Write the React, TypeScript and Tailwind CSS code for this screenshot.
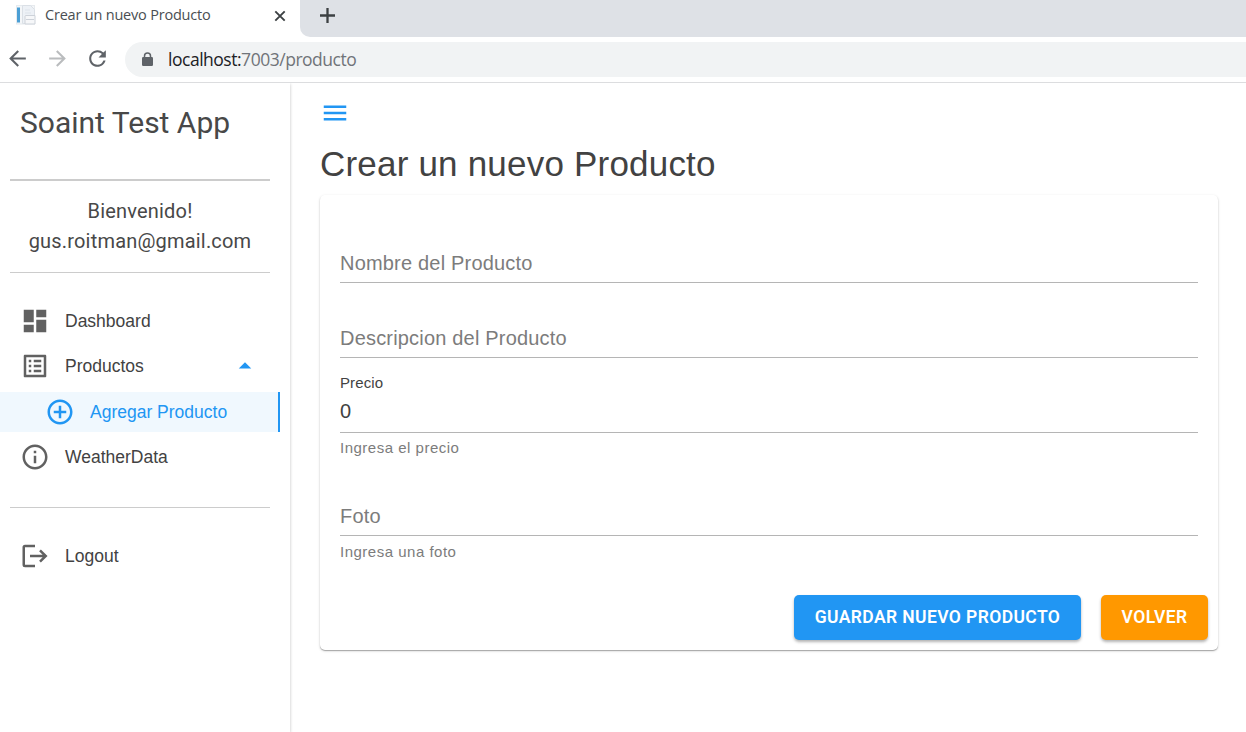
import type { ReactNode } from "react";
import { MdDashboard, MdListAlt, MdAddCircleOutline, MdInfoOutline, MdMenu, MdArrowDropUp, MdArrowBack, MdArrowForward, MdRefresh } from "react-icons/md";

function Favicon() {
  return (
    <svg width="20" height="20" viewBox="0 0 20 20" className="shrink-0">
      <rect x=".5" y=".5" width="18" height="18.5" fill="#f4f6f8" stroke="#e6eaee" />
      <rect x="1" y="2.5" width="3" height="15" fill="#4b9fd5" />
      <path d="M6.500.5h8l4 4v14h-12z" fill="#edf1f6" stroke="#dbe0e6" />
      <path d="M9 5h5M9 8h6" stroke="#dde3ea" />
      <path d="M9.500 10.500h9.500v8.500h-10v-8z" fill="#f6f7f9" stroke="#cdd2d9" />
      <path d="M10 14.500h8" stroke="#cdd2d9" />
    </svg>
  );
}

function LockIcon() {
  return (
    <svg width="13" height="15" viewBox="0 0 13 15" className="shrink-0">
      <path d="M3.500 6V4a3 3 0 0 1 6 0v2" fill="none" stroke="#5f6368" strokeWidth="1.5" />
      <rect x="1" y="5" width="11" height="9" rx="1.2" fill="#5f6368" />
    </svg>
  );
}

function LogoutIcon() {
  return (
    <svg width="30" height="30" viewBox="0 0 24 24" fill="none" stroke="currentColor" strokeWidth="2">
      <path d="M12 4H4Q3 4 3 5V19Q3 20 4 20H12" />
      <path d="M8 12H21M16 7.500L20.600 12L16 16.500" />
    </svg>
  );
}

function NavItem({ icon, label, children }: { icon: ReactNode; label: string; children?: ReactNode }) {
  return (
    <div className="flex h-[45px] items-center pl-5 text-[#424242]">
      <span className="flex w-[45px] pb-[2px] text-[#616161]">{icon}</span>
      <span className="grow">{label}</span>
      {children}
    </div>
  );
}

function Browser() {
  return (
    <header className="font-['Open_Sans','Noto_Sans',sans-serif]">
      <div className="flex h-[37px] bg-white">
        <div className="flex h-[30px] w-[300px] items-center bg-white pr-[14px] pl-4">
          <Favicon />
          <span className="ml-[9px] grow text-[14.500px] tracking-[-0.200px] whitespace-nowrap text-[#4a4e52]">Crear un nuevo Producto</span>
          <svg width="12" height="12" viewBox="0 0 12 12" className="mt-px shrink-0 stroke-[#3c4043]" strokeWidth="1.9">
            <path d="M1.300 1.300l9.400 9.400M10.700 1.300l-9.400 9.400" />
          </svg>
        </div>
        <div className="h-[37px] grow rounded-bl-[10px] bg-[#dee1e6] pt-[7px] pl-[19px]">
          <svg width="17" height="17" viewBox="0 0 17 17" className="stroke-[#3c4043]" strokeWidth="2.300">
            <path d="M8.500 1v15M1 8.500h15" />
          </svg>
        </div>
      </div>
      <div className="flex h-[46px] items-center border-b border-[#dcdddf] pl-[5px]">
        <MdArrowBack className="mb-[2px] size-[25px] text-[#5f6368]" />
        <MdArrowForward className="mb-[2px] ml-[15px] size-[25px] text-[#babcbe]" />
        <MdRefresh className="mb-[2px] ml-[15px] size-[25px] text-[#5f6368]" />
        <div className="ml-[15px] flex h-[35px] grow items-center rounded-l-full bg-[#f1f3f4] pl-[16px]">
          <LockIcon />
          <span className="ml-[14px] text-[17.500px] tracking-[-0.480px] text-[#707479]"><span className="text-[#202124]">localhost:</span>7003/producto</span>
        </div>
      </div>
    </header>
  );
}

function Sidebar() {
  return (
    <aside className="h-full w-[290px] shrink-0 pt-[18px] text-[17.500px] shadow-[0_1px_3px_rgba(0,0,0,0.25)]">
      <h2 className="pl-5 font-[Roboto,sans-serif] text-[30px] leading-[44px] text-[#484848]">Soaint Test App</h2>
      <hr className="mt-[34px] mr-5 ml-[10px] border-t-2 border-[#ccc]" />
      <div className="mt-[15px] w-[280px] text-center font-[Roboto,sans-serif] text-[20px] leading-[30px] tracking-[0.188px] text-[#484848]">
        <p>Bienvenido!</p>
        <p>gus.roitman@gmail.com</p>
      </div>
      <hr className="mt-[16px] mr-5 ml-[10px] border-[#ccc]" />
      <nav className="mt-[26px]">
        <NavItem icon={<MdDashboard size={30} />} label="Dashboard" />
        <NavItem icon={<MdListAlt size={30} />} label="Productos">
          <MdArrowDropUp size={30} className="mr-[30px] mb-[2px] text-[#2196f3]" />
        </NavItem>
        <div className="mt-[3px] mb-[3px] flex h-10 w-[280px] items-center border-r-2 border-[#2196f3] bg-[#f0f8fe] pl-[45px] text-[#2196f3]">
          <MdAddCircleOutline size={30} />
          <span className="ml-[15px]">Agregar Producto</span>
        </div>
        <NavItem icon={<MdInfoOutline size={30} />} label="WeatherData" />
      </nav>
      <hr className="mt-[27px] mr-5 mb-[26px] ml-[10px] border-[#ccc]" />
      <NavItem icon={<LogoutIcon />} label="Logout" />
    </aside>
  );
}

function Field({ label, className }: { label: string; className: string }) {
  return <div className={`border-b border-[#b5b5b5] text-[20px] tracking-[0.188px] text-[#7c7c7c] ${className}`}>{label}</div>;
}

export default function App() {
  return (
    <div className="h-[732px] w-[1246px] overflow-hidden bg-white font-['Liberation_Sans',Arial,sans-serif]">
      <Browser />
      <div className="flex h-[649px] overflow-hidden">
        <Sidebar />
        <main className="grow pt-[15px] pr-7 pl-[30px]">
          <MdMenu size={30} className="text-[#2196f3]" />
          <h1 className="mt-[15px] text-[35px] leading-[42px] tracking-[0.200px] text-[#424242]">Crear un nuevo Producto</h1>
          <section className="mt-[10px] h-[455px] rounded-[5px] px-5 pt-[52px] shadow-[0_1px_1px_rgba(0,0,0,0.28),0_1px_3px_rgba(0,0,0,0.15)]">
            <Field label="Nombre del Producto" className="h-[36px] leading-[32px]" />
            <Field label="Descripcion del Producto" className="mt-[39px] h-[36px] leading-[32px]" />
            <div className="mt-[15px] text-[15px] leading-[20px] tracking-[0.100px] text-[#424242]">Precio</div>
            <div className="h-[40px] border-b border-[#b5b5b5] pt-[3px] text-[20px] leading-[30px] text-[#424242]">0</div>
            <div className="mt-[5px] text-[15px] leading-[20px] tracking-[0.500px] text-[#7c7c7c]">Ingresa el precio</div>
            <Field label="Foto" className="mt-[42px] h-[36px] leading-[32px]" />
            <div className="mt-[6px] text-[15px] leading-[20px] tracking-[0.500px] text-[#7c7c7c]">Ingresa una foto</div>
            <div className="-mr-[10px] mt-[33px] flex justify-end gap-5 font-[Roboto,sans-serif] text-[17.500px] font-semibold tracking-[0.400px] text-white">
              <button className="h-[45px] w-[287px] rounded-[5px] bg-[#2196f3] whitespace-nowrap shadow-[0_2px_3px_rgba(0,0,0,0.3)]">GUARDAR NUEVO PRODUCTO</button>
              <button className="h-[45px] w-[107px] rounded-[5px] bg-[#ff9800] shadow-[0_2px_3px_rgba(0,0,0,0.3)]">VOLVER</button>
            </div>
          </section>
        </main>
      </div>
    </div>
  );
}
